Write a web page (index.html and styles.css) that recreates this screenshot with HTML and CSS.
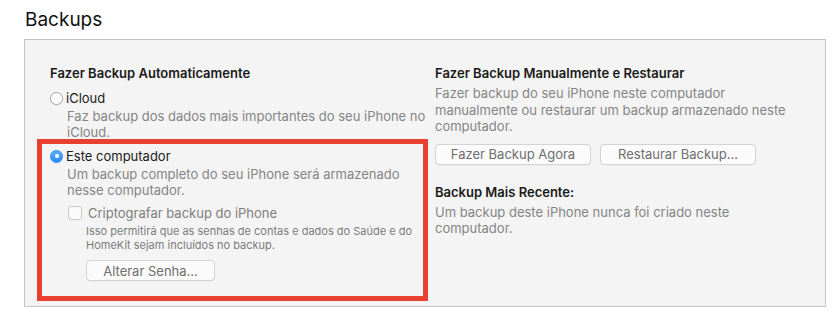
FILE: index.html
```html
<!DOCTYPE html>
<html lang="pt-BR">

<head>
    <meta charset="UTF-8">
    <meta name="viewport" content="width=device-width, initial-scale=1.0">
    <title>Backups</title>
    <link rel="stylesheet" href="styles.css">
</head>

<body>
    <h1 class="section-title">Backups</h1>

    <div class="backup-panel">
        <div class="auto-column">
            <h2 class="group-title indent">Fazer Backup Automaticamente</h2>

            <div class="option indent">
                <label class="radio-row">
                    <span class="radio"></span>
                    <span class="radio-label">iCloud</span>
                </label>
                <p class="option-desc">Faz backup dos dados mais importantes do seu iPhone no iCloud.</p>
            </div>

            <div class="highlight-box">
                <label class="radio-row">
                    <span class="radio checked"></span>
                    <span class="radio-label">Este computador</span>
                </label>
                <p class="option-desc">Um backup completo do seu iPhone será armazenado nesse computador.</p>

                <div class="encrypt">
                    <label class="check-row">
                        <span class="checkbox"></span>
                        <span class="check-label">Criptografar backup do iPhone</span>
                    </label>
                    <p class="small-desc">Isso permitirá que as senhas de contas e dados do Saúde e do HomeKit sejam incluídos no backup.</p>
                    <button class="mac-button change-pass">Alterar Senha...</button>
                </div>
            </div>
        </div>

        <div class="manual-column">
            <h2 class="group-title">Fazer Backup Manualmente e Restaurar</h2>
            <p class="column-desc">Fazer backup do seu iPhone neste computador<br>manualmente ou restaurar um backup armazenado neste computador.</p>

            <div class="button-row">
                <button class="mac-button wide">Fazer Backup Agora</button>
                <button class="mac-button wide">Restaurar Backup...</button>
            </div>

            <h2 class="group-title recent">Backup Mais Recente:</h2>
            <p class="column-desc">Um backup deste iPhone nunca foi criado neste computador.</p>
        </div>
    </div>
</body>

</html>
```

FILE: styles.css
```css
body {
    margin: 0;
    padding: 0 11px 0 24px;
    background-color: #fff;
    font-family: Inter, 'Liberation Sans', sans-serif;
    font-size: 13px;
    color: #1d1d1d;
}

.section-title {
    margin: 0;
    padding: 8px 0 0 1px;
    height: 31px;
    font-size: 19px;
    font-weight: 400;
    line-height: 24px;
    color: #111;
}

.backup-panel {
    display: flex;
    gap: 7px;
    width: 788px;
    height: 266px;
    padding: 0 0 0 12px;
    border: 1px solid #c4c4c4;
    background-color: #f4f4f4;
}

.auto-column {
    width: 391px;
    padding-top: 25px;
}

.manual-column {
    width: 356px;
    padding-top: 25px;
}

.indent {
    padding-left: 13px;
}

.group-title {
    margin: 0;
    font-size: 13px;
    font-weight: 600;
    line-height: 16px;
    color: #1a1a1a;
}

.option {
    margin-top: 9px;
    height: 49px;
}

.radio-row,
.check-row {
    display: flex;
    align-items: center;
    gap: 3px;
    height: 16px;
    line-height: 16px;
}

.radio {
    width: 13px;
    height: 13px;
    border-radius: 50%;
    border: 1px solid #a9a9a9;
    background-color: #fff;
    box-sizing: border-box;
    box-shadow: 0 0.5px 1px rgba(0, 0, 0, 0.1);
    position: relative;
}

.radio.checked {
    border-color: #2c8cf4;
    background: linear-gradient(#5fb0fd, #2a88f6);
}

.radio.checked::after {
    content: '';
    position: absolute;
    left: 3.5px;
    top: 3.5px;
    width: 4px;
    height: 4px;
    border-radius: 50%;
    background-color: #fff;
}

.radio-label {
    color: #1a1a1a;
}

.option-desc {
    margin: 2px 0 0 17px;
    line-height: 16px;
    color: #858585;
}

.highlight-box {
    border: 5px solid #e8412f;
    padding: 4px 8px 0;
    height: 148px;
}

.encrypt {
    padding-left: 18px;
    margin-top: 7px;
}

.checkbox {
    width: 14px;
    height: 14px;
    border: 1px solid #c8c8c8;
    border-radius: 3px;
    background-color: #fbfbfb;
    box-sizing: border-box;
}

.check-label {
    margin-left: 3px;
    color: #7e7e7e;
}

.small-desc {
    margin: 3px 0 0 18px;
    font-size: 11px;
    line-height: 14px;
    color: #7c7c7c;
}

.mac-button {
    height: 21px;
    padding: 0;
    border: 1px solid #d3d3d3;
    border-radius: 4px;
    background-color: #fbfbfb;
    font-family: inherit;
    font-size: 13px;
    color: #6e6e6e;
    box-shadow: 0 0.5px 0.5px rgba(0, 0, 0, 0.05);
}

.change-pass {
    width: 129px;
    margin: 8px 0 0 18px;
}

.column-desc {
    margin: 4px 0 0;
    line-height: 16.5px;
    color: #858585;
}

.button-row {
    display: flex;
    gap: 9px;
    margin-top: 9px;
}

.mac-button.wide {
    width: 156px;
}

.recent {
    margin-top: 19px;
}
```
